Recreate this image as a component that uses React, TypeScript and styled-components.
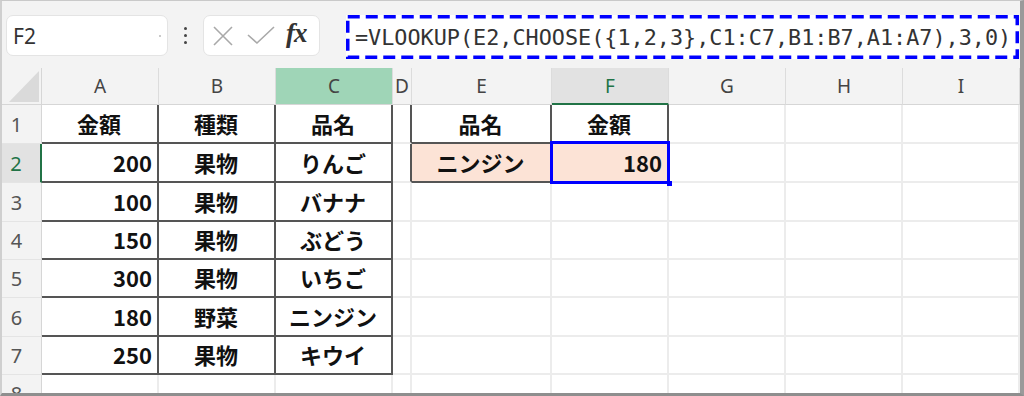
import { FunctionComponent } from "react";
import styled, { createGlobalStyle } from "styled-components";

const GlobalStyle = createGlobalStyle`
  html, body {
    margin: 0;
    padding: 0;
    background: #ffffff;
  }
`;

const COLS = [40, 117, 117, 117, 19, 140, 117, 117, 117, 117];
const ROWS = [37, 39, 39, 39, 38, 38, 39, 38, 38];
const LETTERS = ["A", "B", "C", "D", "E", "F", "G", "H", "I"];

const JP = `"Noto Sans CJK JP", "Noto Sans", sans-serif`;
const GREEN = "#217346";

const Window = styled.div`
  width: 1024px;
  height: 396px;
  box-sizing: border-box;
  border-top: 1px solid #c9c9c9;
  border-left: 2px solid #cfcfcf;
  border-right: 4px solid #9a9a9a;
  border-bottom: 3px solid #8e8e8e;
  background: #f3f3f3;
  display: flex;
  flex-direction: column;
  overflow: hidden;
`;

const Toolbar = styled.div`
  height: 67px;
  flex-shrink: 0;
  display: flex;
  align-items: flex-start;
  padding: 14px 0 0 4px;
  box-sizing: border-box;
`;

const NameBox = styled.div`
  width: 162px;
  height: 41px;
  box-sizing: border-box;
  background: #ffffff;
  border: 1px solid #e4e4e4;
  border-radius: 7px;
  display: flex;
  align-items: center;
  justify-content: space-between;
  padding: 0 6px 0 6px;
  font-family: "Noto Sans", sans-serif;
  font-size: 21px;
  color: #333333;
`;

const Caret = styled.span`
  width: 2px;
  height: 2px;
  border-radius: 50%;
  background: #b8b8b8;
`;

const Kebab = styled.div`
  width: 35px;
  height: 41px;
  display: flex;
  flex-direction: column;
  align-items: center;
  justify-content: center;
  gap: 4px;
  span {
    width: 3px;
    height: 3px;
    border-radius: 50%;
    background: #444444;
  }
`;

const ButtonGroup = styled.div`
  width: 117px;
  height: 41px;
  box-sizing: border-box;
  background: #ffffff;
  border: 1px solid #e4e4e4;
  border-radius: 7px;
  display: flex;
  align-items: center;
  padding: 0 8px 0 8px;
  gap: 13px;
`;

const Fx = styled.span`
  font-family: "Liberation Serif", serif;
  font-style: italic;
  font-weight: 700;
  font-size: 27px;
  color: #333333;
  letter-spacing: -1px;
  margin-left: -2px;
  line-height: 1;
  padding-bottom: 4px;
`;

const FormulaBar = styled.div`
  position: relative;
  margin-left: 26px;
  width: 673px;
  height: 44px;
  background: #ffffff;
  display: flex;
  align-items: center;
  padding-left: 9px;
  box-sizing: border-box;
  font-family: "DejaVu Sans Mono", "Liberation Mono", monospace;
  font-size: 21.8px;
  color: #333333;
  white-space: nowrap;
`;

const DashFrame = styled.svg`
  position: absolute;
  inset: 0;
  width: 100%;
  height: 100%;
  pointer-events: none;
`;

const Sheet = styled.div`
  flex: 1;
  display: grid;
  grid-template-columns: ${COLS.map((c) => `${c}px`).join(" ")};
  grid-template-rows: ${ROWS.map((r) => `${r}px`).join(" ")};
  background: #ffffff;
  overflow: hidden;
`;

const Corner = styled.div`
  background: #f3f3f3;
  border-right: 1px solid #d6d6d6;
  border-bottom: 1px solid #d6d6d6;
  display: flex;
  align-items: flex-end;
  justify-content: flex-end;
  padding: 0 2px 2px 0;
  box-sizing: border-box;
`;

const ColHead = styled.div<{ $state?: "picked" | "active" }>`
  box-sizing: border-box;
  display: flex;
  align-items: center;
  justify-content: center;
  font-family: "Noto Sans", sans-serif;
  font-size: 19px;
  color: ${(p) => (p.$state === "active" ? GREEN : "#444444")};
  background: ${(p) =>
    p.$state === "picked" ? "#9fd5b7" : p.$state === "active" ? "#e2e2e2" : "#f3f3f3"};
  border-right: 1px solid #dcdcdc;
  border-bottom: ${(p) => (p.$state === "active" ? `2px solid ${GREEN}` : "1px solid #d6d6d6")};
  overflow: hidden;
`;

const RowHead = styled.div<{ $active?: boolean }>`
  box-sizing: border-box;
  display: flex;
  align-items: center;
  justify-content: center;
  padding-right: 10px;
  font-family: "Noto Sans", sans-serif;
  font-size: 20px;
  color: ${(p) => (p.$active ? GREEN : "#555555")};
  background: ${(p) => (p.$active ? "#e2e2e2" : "#f3f3f3")};
  border-right: ${(p) => (p.$active ? `2px solid ${GREEN}` : "1px solid #d6d6d6")};
  border-bottom: 1px solid #e4e4e4;
  overflow: hidden;
`;

const Cell = styled.div<{
  $align: "center" | "right";
  $ruled?: boolean;
  $edge?: boolean;
  $fill?: string;
}>`
  position: relative;
  box-sizing: border-box;
  display: flex;
  align-items: center;
  justify-content: ${(p) => (p.$align === "right" ? "flex-end" : "center")};
  padding: 0 5px 2px 4px;
  font-family: ${JP};
  font-weight: 700;
  font-size: 22px;
  color: #111111;
  background: ${(p) => p.$fill ?? "#ffffff"};
  border-right: 2px solid ${(p) => (p.$ruled || p.$edge ? "#555555" : "#ececec")};
  border-bottom: 2px solid ${(p) => (p.$ruled ? "#555555" : "#ececec")};
  white-space: nowrap;
`;

// active-cell frame, drawn above the neighbouring cells
const Selection = styled.div`
  position: absolute;
  z-index: 3;
  left: -2px;
  top: -3px;
  right: -3px;
  bottom: -3px;
  border: 3.5px solid #0000ff;
  pointer-events: none;
  &::after {
    content: "";
    position: absolute;
    right: -5px;
    bottom: -5px;
    width: 5px;
    height: 5px;
    background: #0000ff;
  }
`;

type CellData = { text: string; num?: boolean; fill?: string };

const PEACH = "#fce3d6";

const table: CellData[][] = [
  [{ text: "金額" }, { text: "種類" }, { text: "品名" }],
  [{ text: "200", num: true }, { text: "果物" }, { text: "りんご" }],
  [{ text: "100", num: true }, { text: "果物" }, { text: "バナナ" }],
  [{ text: "150", num: true }, { text: "果物" }, { text: "ぶどう" }],
  [{ text: "300", num: true }, { text: "果物" }, { text: "いちご" }],
  [{ text: "180", num: true }, { text: "野菜" }, { text: "ニンジン" }],
  [{ text: "250", num: true }, { text: "果物" }, { text: "キウイ" }],
];

// E1:F2 lookup block
const lookup: CellData[][] = [
  [{ text: "品名" }, { text: "金額" }],
  [{ text: "ニンジン", fill: PEACH }, { text: "180", num: true, fill: PEACH }],
];

const Cross = () => (
  <svg width="22" height="22" viewBox="0 0 22 22">
    <path d="M2 2 L20 20 M20 2 L2 20" stroke="#a9a9a9" strokeWidth="1.6" fill="none" />
  </svg>
);

const Check = () => (
  <svg width="28" height="20" viewBox="0 0 28 20">
    <path d="M1 9 L10 17 L27 1" stroke="#a9a9a9" strokeWidth="1.6" fill="none" />
  </svg>
);

const CornerMark = () => (
  <svg width="30" height="31" viewBox="0 0 30 31">
    <polygon points="30,0 30,31 0,31" fill="#dadada" />
  </svg>
);

const App: FunctionComponent = () => {
  const cells = [];
  for (let r = 0; r < ROWS.length - 1; r++) {
    const row = r + 1;
    cells.push(
      <RowHead key={`h${row}`} $active={row === 2}>
        {row}
      </RowHead>
    );
    for (let c = 0; c < LETTERS.length; c++) {
      let data: CellData | undefined;
      let ruled = false;
      if (c <= 2 && r < table.length) {
        data = table[r][c];
        ruled = true;
      }
      if ((c === 4 || c === 5) && r < lookup.length) {
        data = lookup[r][c - 4];
        ruled = true;
      }
      const edge = c === 3 && r < lookup.length;
      cells.push(
        <Cell
          key={`c${row}-${c}`}
          $align={data?.num ? "right" : "center"}
          $ruled={ruled}
          $edge={edge}
          $fill={data?.fill}
        >
          {data?.text}
          {row === 2 && c === 5 && <Selection />}
        </Cell>
      );
    }
  }

  return (
    <>
      <GlobalStyle />
      <Window>
        <Toolbar>
          <NameBox>
            F2
            <Caret />
          </NameBox>
          <Kebab>
            <span />
            <span />
            <span />
          </Kebab>
          <ButtonGroup>
            <Cross />
            <Check />
            <Fx>fx</Fx>
          </ButtonGroup>
          <FormulaBar>
            =VLOOKUP(E2,CHOOSE({"{"}1,2,3{"}"},C1:C7,B1:B7,A1:A7),3,0)
            <DashFrame>
              <rect
                x="1.75"
                y="1.75"
                width="calc(100% - 3.5px)"
                height="calc(100% - 3.5px)"
                fill="none"
                stroke="#0000ff"
                strokeWidth="3.5"
                strokeDasharray="12 6"
              />
            </DashFrame>
          </FormulaBar>
        </Toolbar>
        <Sheet>
          <Corner>
            <CornerMark />
          </Corner>
          {LETTERS.map((l) => (
            <ColHead key={l} $state={l === "C" ? "picked" : l === "F" ? "active" : undefined}>
              {l}
            </ColHead>
          ))}
          {cells}
          <RowHead>8</RowHead>
        </Sheet>
      </Window>
    </>
  );
};

export default App;
